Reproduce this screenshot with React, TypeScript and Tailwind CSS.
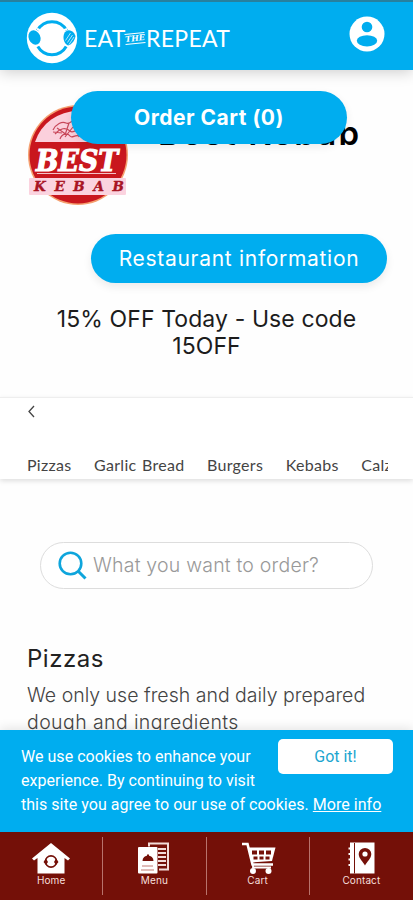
import type { ReactNode } from 'react'

const categories = ['Pizzas', 'Garlic Bread', 'Burgers', 'Kebabs', 'Calzones']

function BrandMark() {
  return (
    <svg width="52" height="52" viewBox="0 0 52 52">
      <circle cx="26" cy="26" r="25.2" fill="#fff" />
      {/* plate rim, open on both sides */}
      <path d="M11.500 18.500A16.400 16.400 0 0 1 40.500 18.500M11.800 34.500A16.400 16.400 0 0 0 40.200 34.500" fill="none" stroke="#00adef" strokeWidth="3" />
      <path d="M11 17c5 1 5 7 4.500 10s1 6 3 8M41 17c-4 1-5 4-4.500 7s1 8-2 11" fill="none" stroke="#fff" strokeWidth="2" />
      {/* spoon */}
      <ellipse cx="8.500" cy="25.500" rx="5.800" ry="7.400" transform="rotate(-25 8.500 25.500)" fill="#00adef" />
      {/* fork */}
      <path d="M49.500 24c-2-6.500-9-8-11.500-2-1.500 5 .5 10 4 11.500 4-1 7-5.500 7.500-9.500z" fill="#00adef" />
      <path d="M39.500 28.500l5-7.500M41.500 30.500l5-7.500M43 32.500l5-7.500" stroke="#d8f3fd" strokeWidth=".8" />
    </svg>
  )
}

function KebabLogo() {
  return (
    <svg width="104" height="104" viewBox="0 0 104 104" className="shrink-0">
      <circle cx="51" cy="52" r="50" fill="#f5a070" />
      <circle cx="51" cy="52" r="48.500" fill="#c9171e" />
      <path d="M8 39A45 44 0 0 1 94 39z" fill="#fbd0dc" />
      <g fill="none" stroke="#c8485a" strokeWidth="1.2">
        <path d="M26 27c3-6 9-9 13-7s6-4 10-3 5 5 9 4M28 31c5-6 11-7 15-3s8-5 13-3M33 36c2-6 8-6 10-3s5-2 9 0M30 25l10 7M42 20l-4 12M48 20l4 14M26 29l9 1M38 34l8-10" />
      </g>
      <path d="M10 70.500h79" stroke="#f4c3c8" strokeWidth="1.200" />
      <rect x="2" y="75" width="97" height="17" rx="1" fill="#fbd3df" />
      <text x="9" y="67.500" fontSize="29" fontWeight="900" fontStyle="italic" fontFamily="'DejaVu Serif', serif" fill="#fff" stroke="#fff" strokeWidth="1.200" textLength="82" lengthAdjust="spacingAndGlyphs">BEST</text>
      <text x="7" y="88" fontSize="13.500" fontWeight="900" fontStyle="italic" fontFamily="'DejaVu Serif', serif" fill="#a81424" stroke="#a81424" strokeWidth=".4" textLength="90">KEBAB</text>
    </svg>
  )
}

function HomeIcon() {
  return (
    <svg width="40" height="33" viewBox="0 0 40 33">
      <path d="M20 1L1 16.500l2 2L6.500 16v15.500h27V16l3.500 2.500 2-2z" fill="#fff" />
      <circle cx="20" cy="19.500" r="5.600" fill="none" stroke="#741008" strokeWidth="1.600" />
      <path d="M12.500 20l2.500-3.500 2 3.500-2 3zM27.500 20L25 16.500 23 20l2 3z" fill="#741008" />
    </svg>
  )
}

function MenuIcon() {
  return (
    <svg width="40" height="33" viewBox="0 0 40 33">
      <path d="M15 4.500V1.500h19v26h-9" fill="none" stroke="#f3dcd8" strokeWidth="2" />
      <path d="M24 7h8M24 11h8M24 15h8M24 19h8M24 23h8" stroke="#f3dcd8" strokeWidth="1.800" />
      <rect x="4" y="5" width="19.500" height="26.500" rx="1" fill="#fff" />
      <path d="M8.500 19a5.500 5.500 0 0 1 11 0zM13 12.500h2v2h-2z" fill="#741008" />
      <path d="M8 24h11M7 28h13" stroke="#c27a74" strokeWidth="1.200" />
    </svg>
  )
}

function CartIcon() {
  return (
    <svg width="40" height="33" viewBox="0 0 40 33">
      <path d="M4 2h5.500l5 20.500H35" fill="none" stroke="#fff" strokeWidth="2.600" />
      <path d="M10 5.500h27.500L34 19l-20 1.500z" fill="#fff" />
      <path d="M14 8.500h5v4h-5zM21 8.500h5v4h-5zM28 8.500h5v4h-5zM15.500 14.500h4v3h-4zM21.500 14.500h4v3h-4zM27.500 14.500h4v3h-4z" fill="#741008" />
      <path d="M15 22v3.500h18" fill="none" stroke="#fff" strokeWidth="1.800" />
      <circle cx="15" cy="29" r="3" fill="#fff" />
      <circle cx="30.500" cy="29" r="3" fill="#fff" />
    </svg>
  )
}

function ContactIcon() {
  return (
    <svg width="40" height="33" viewBox="0 0 40 33">
      <path d="M9 .5h24.500V31.500H9z" fill="#fff" />
      <path d="M13.500 1v30.500" stroke="#741008" strokeWidth="1" />
      <path d="M7.500 6.500h4M7.500 12h4M7.500 17.500h4M7.500 23h4" stroke="#fff" strokeWidth="2" />
      <path d="M24 23.500c-2-4-6.300-7-6.300-11.500a6.300 6 0 0 1 12.600 0c0 4.500-4.300 7.500-6.300 11.500z" fill="#741008" />
      <circle cx="24" cy="12" r="2.600" fill="#fff" />
    </svg>
  )
}

const tabs: { label: string; icon: ReactNode }[] = [
  { label: 'Home', icon: <HomeIcon /> },
  { label: 'Menu', icon: <MenuIcon /> },
  { label: 'Cart', icon: <CartIcon /> },
  { label: 'Contact', icon: <ContactIcon /> },
]

export default function App() {
  return (
    <div className="relative flex h-[900px] w-[413px] flex-col overflow-hidden bg-[#fefefe] font-['Inter',sans-serif]">
      {/* Header */}
      <header className="relative z-10 flex h-[70px] shrink-0 items-center justify-between border-t-2 border-[#27809f] bg-[#00adef] pr-[28px] pl-[26px] shadow-[0_2px_14px_rgba(0,0,0,0.2)]">
        <div className="flex items-center pt-1">
          <BrandMark />
          <div className="ml-[6px] flex items-center font-['Lato',sans-serif] text-[23px] leading-none text-white">
            <span className="w-[41px] tracking-[0.2px]">EAT</span>
            <span className="w-[20px] -rotate-6 border-y border-white text-center font-['DejaVu_Serif',serif] text-[8px] leading-[9px] font-bold italic">THE</span>
            <span className="ml-px tracking-[0.3px]">REPEAT</span>
          </div>
        </div>
        <svg width="36" height="36" viewBox="0 0 36 36" className="-mt-1">
          <circle cx="18" cy="18" r="17.500" fill="#fff" />
          <circle cx="18" cy="11" r="5.300" fill="#00adef" />
          <ellipse cx="18" cy="24.800" rx="10.200" ry="5.600" fill="#00adef" />
        </svg>
      </header>

      <button className="absolute top-[91px] left-[71px] z-20 h-[53px] w-[276px] rounded-full bg-[#00adef] text-[21px] font-bold tracking-[0.5px] whitespace-nowrap text-white shadow-[0_3px_8px_rgba(0,0,0,0.08)]">
        Order Cart (0)
      </button>

      <main className="min-h-0 flex-1 overflow-hidden">
        <div className="flex pt-[33px] pl-[27px]">
          <KebabLogo />
          <h1 className="mt-[9px] ml-[27px] text-[33px] leading-[42px] font-semibold tracking-[2.2px] whitespace-nowrap text-black">Best Kebab</h1>
        </div>

        <button className="mt-[27px] ml-[91px] block h-[49px] w-[296px] rounded-full bg-[#00adef] text-[21px] tracking-[0.7px] whitespace-nowrap text-white shadow-[0_4px_8px_rgba(0,0,0,0.08)]">
          Restaurant information
        </button>

        <p className="mt-[23px] text-center text-[23px] leading-[27px] tracking-[0.1px] text-[#1c1c1c]">
          15% OFF Today - Use code
          <br />
          15OFF
        </p>

        {/* Category strip */}
        <nav className="mt-[37px] h-[82px] border-t border-[#eee] bg-white px-[27px] shadow-[0_2px_5px_rgba(0,0,0,0.13)]">
          <svg width="9" height="13" viewBox="0 0 9 13" className="mt-[7px]">
            <path d="M7 1L2 6.500 7 12" fill="none" stroke="#444" strokeWidth="1.300" />
          </svg>
          <div className="mt-[37px] flex w-[361px] gap-[22.5px] overflow-hidden font-['Lato',sans-serif] text-[16px] leading-[20px] tracking-[0.3px] [word-spacing:1px] whitespace-nowrap text-[#444]">
            {categories.map(name => (
              <span key={name}>{name}</span>
            ))}
          </div>
        </nav>

        <div className="mt-[63px] ml-[40px] flex h-[47px] w-[333px] items-center rounded-full border border-[#ddd] bg-white pl-[17px]">
          <svg width="30" height="30" viewBox="0 0 30 30" className="shrink-0">
            <circle cx="12.500" cy="12.500" r="10.800" fill="none" stroke="#0ea5dc" strokeWidth="2.600" />
            <path d="M20 20l7.500 7.500" stroke="#0ea5dc" strokeWidth="3" />
          </svg>
          <span className="ml-[5px] text-[19.500px] font-light tracking-[0.2px] whitespace-nowrap text-[#999]">What you want to order?</span>
        </div>

        <section className="mt-[56px] pl-[27px]">
          <h2 className="text-[24px] leading-[28px] tracking-[0.5px] text-[#222]">Pizzas</h2>
          <p className="mt-[9px] text-[19.500px] leading-[27px] font-light whitespace-nowrap text-[#444]">
            We only use fresh and daily prepared
            <br />
            <span className="tracking-[0.4px]">dough and ingredients</span>
          </p>
        </section>
      </main>

      {/* Cookie notice */}
      <div className="relative z-10 h-[102px] shrink-0 bg-[#00adef] pt-[15px] pl-[21px] font-['Roboto',sans-serif] text-[16px] leading-[24px] text-white shadow-[0_-2px_10px_rgba(0,0,0,0.1)]">
        <button className="absolute top-[9px] left-[278px] h-[35px] w-[115px] rounded-[5px] bg-white text-[16px] text-[#1ba5cf]">Got it!</button>
        <p className="tracking-[0.03px] whitespace-nowrap">
          We use cookies to enhance your
          <br />
          experience. By continuing to visit
          <br />
          this site you agree to our use of cookies. <a className="underline">More info</a>
        </p>
      </div>

      {/* Bottom tabs */}
      <footer className="grid h-[68px] shrink-0 grid-cols-4 bg-[#741008] py-[5px]">
        {tabs.map(tab => (
          <div key={tab.label} className="flex flex-col items-center border-r border-[#b8736c] pt-[5px] last:border-r-0">
            {tab.icon}
            <span className="text-[10px] leading-[10px] tracking-[0.1px] text-[#f7dfdc]">{tab.label}</span>
          </div>
        ))}
      </footer>
    </div>
  )
}
